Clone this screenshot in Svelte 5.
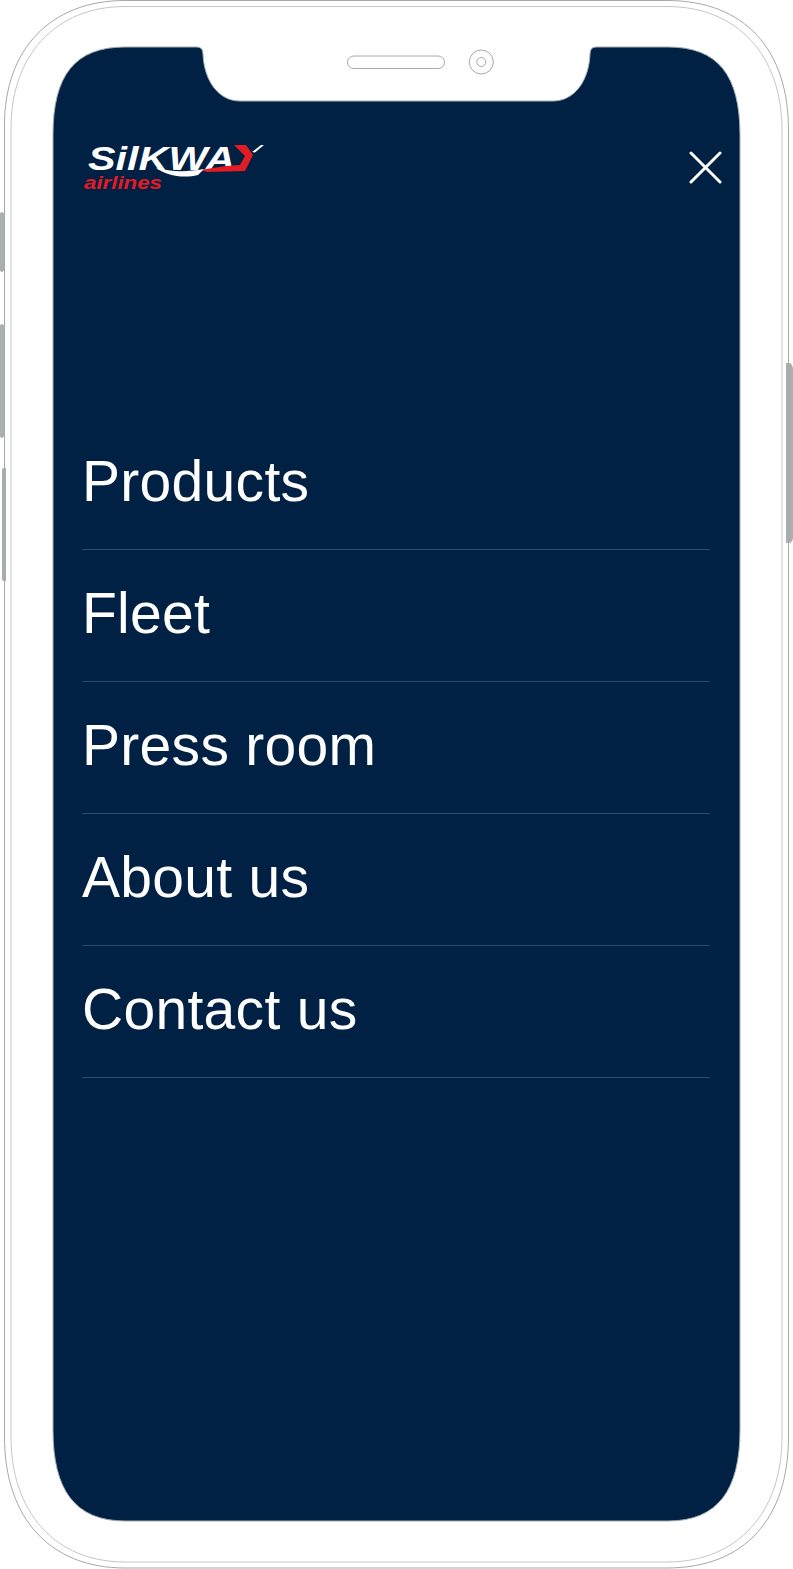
<script>
  const items = ['Products', 'Fleet', 'Press room', 'About us', 'Contact us'];
</script>

<div class="device">
  <svg class="shell" width="793" height="1569" viewBox="0 0 793 1569" aria-hidden="true">
    <g fill="#abaeb0">
      <path d="M0 214 Q0 212 2 212 L5 214 V270 L2 272 Q0 272 0 270Z" />
      <path d="M0 326 Q0 324 2 324 L5 326 V436 L2 438 Q0 438 0 436Z" />
      <path d="M2 470 Q2 468 4 468 L6 468 V581 L4 581 Q2 581 2 579Z" />
      <path d="M786 363 H790 Q793 365 793 368 V538 Q793 541 790 543 H786Z" />
    </g>
    <path class="frame" d="M4.5 125 C4.5 50 50 0.5 125 0.5 H667 C745 0.5 788.5 50 788.5 130 V1437 C788.5 1518 745 1568 667 1568 H125 C50 1568 4.5 1518 4.5 1437Z" />
    <path class="frame light" d="M11 128 C11 56 55 6.5 125 6.5 H667 C738 6.5 782 56 782 130 V1437 C782 1512 738 1562 667 1562 H125 C55 1562 11 1512 11 1437Z" />
    <path class="screen" d="M53 135 C53 75 75 47 125 47 H197 Q203 47 203 54 C204 80 218 101 240 101 H553 C575 101 589 80 590 54 Q590 47 596 47 H668 C718 47 740 75 740 135 V1430 C740 1490 718 1521 668 1521 H125 C75 1521 53 1490 53 1430Z" />
    <rect class="frame" x="347.5" y="56" width="97" height="12.5" rx="6.2" />
    <circle class="frame" cx="481.3" cy="62" r="12" />
    <circle class="frame" cx="481.3" cy="62" r="4.5" />
  </svg>

  <div class="content">
    <header>
      <svg class="logo" width="184" height="52" viewBox="80 140 184 52" role="img" aria-label="Silkway Airlines">
        <text class="brand" x="86" y="170" textLength="147" lengthAdjust="spacingAndGlyphs">SilKWA</text>
        <path fill="#fff" d="M250 152 L259 145 H262 L253 152.5Z" />
        <path fill="#e31b23" d="M232 145 H244 L251 155 L243 171 L205 172 L198 170 L224 166 L238 165 L243 156Z" />
        <path fill="#fff" d="M154 168 C170 172 184 172 202 169 L196 175 C180 179 164 175 154 168Z" />
        <text class="sub" x="82" y="189" textLength="78" lengthAdjust="spacingAndGlyphs">airlines</text>
      </svg>
      <svg class="close" width="33" height="33" viewBox="0 0 33 33" role="img" aria-label="Close">
        <path d="M2 2 L31 31 M31 2 L2 31" />
      </svg>
    </header>

    <nav>
      {#each items as item}
        <a href="#top">{item}</a>
      {/each}
    </nav>
  </div>
</div>

<style>
  :global(body) {
    margin: 0;
    background: #fff;
  }

  .device {
    position: relative;
    width: 793px;
    height: 1569px;
    overflow: hidden;
  }

  .shell {
    position: absolute;
    inset: 0;
  }

  .frame {
    fill: none;
    stroke: #a6a8aa;
    stroke-width: 1;
  }

  .frame.light {
    stroke: #c4c6c8;
  }

  .screen {
    fill: #002144;
    stroke: #a6aeb6;
    stroke-width: 1;
  }

  .content {
    position: relative;
    box-sizing: border-box;
    height: 100%;
    padding: 140px 83px 0 82px;
    font-family: "Liberation Sans", Arial, sans-serif;
  }

  header {
    display: flex;
    justify-content: space-between;
    align-items: flex-start;
    height: 278px;
  }

  .logo {
    display: block;
  }

  .brand {
    font-family: "Liberation Sans", Arial, sans-serif;
    font-size: 34px;
    font-weight: 700;
    font-style: italic;
    fill: #fff;
  }

  .sub {
    font-family: "Liberation Sans", Arial, sans-serif;
    font-size: 18px;
    font-weight: 700;
    font-style: italic;
    fill: #e31b23;
  }

  .close {
    display: block;
    margin: 11px -12px 0 0;
    fill: none;
    stroke: #fff;
    stroke-width: 3;
    stroke-linecap: round;
  }

  nav {
    display: flex;
    flex-direction: column;
  }

  a {
    box-sizing: border-box;
    display: block;
    height: 132px;
    padding-top: 27px;
    border-bottom: 1px solid #2a4c6e;
    color: #fff;
    font-size: 57px;
    line-height: 72px;
    text-decoration: none;
    letter-spacing: 0.3px;
  }
</style>
